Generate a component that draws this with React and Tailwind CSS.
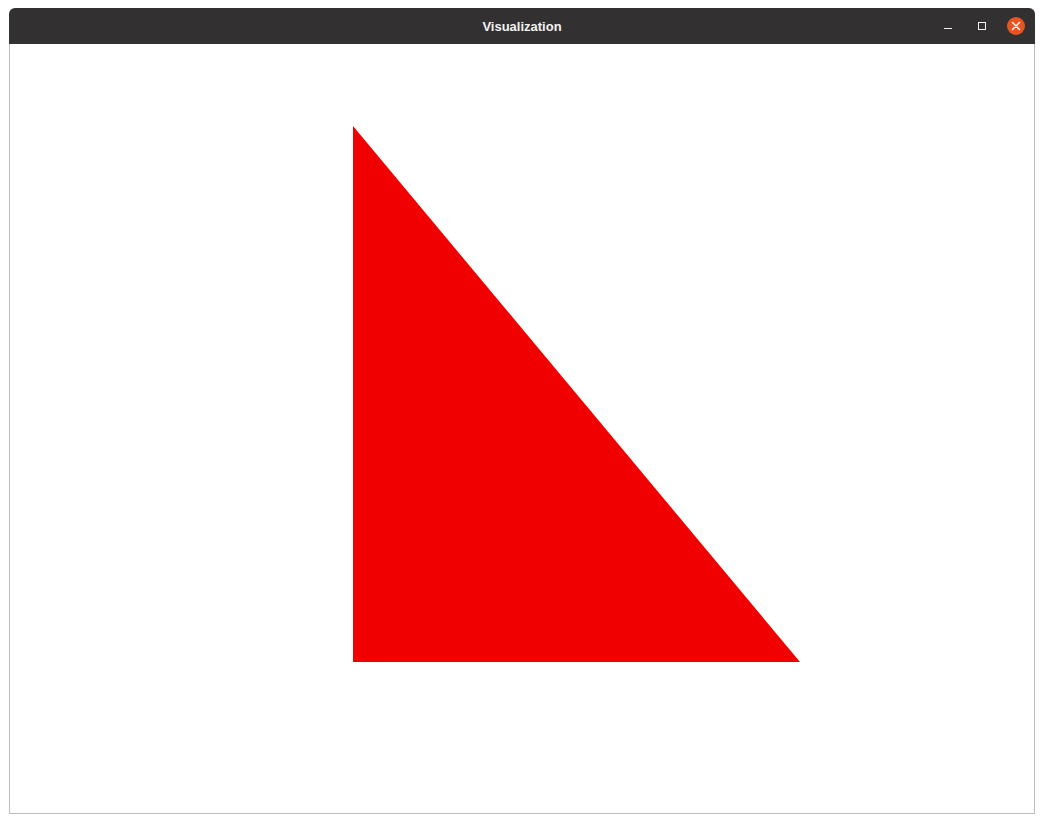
import React from "react";

function TitleBar() {
  return (
    <div className="relative flex h-[36px] items-center justify-center rounded-t-[6px] bg-[#323030] pt-[1px]">
      <span className="font-['Liberation_Sans',sans-serif] text-[13px] font-bold text-[#f2f2f2]">
        Visualization
      </span>
      <div className="absolute right-[10px] top-0 flex h-full items-center">
        <div className="mt-[4px] h-[1px] w-[8px] bg-[#f0f0f0]" />
        <div className="ml-[26px] h-[8px] w-[8px] border border-[#f0f0f0]" />
        <div className="ml-[21px] flex h-[18px] w-[18px] items-center justify-center rounded-full bg-[#e95420]">
          <svg width="10" height="10" viewBox="0 0 10 10">
            <path d="M1.5 1.5 L8.5 8.5 M8.5 1.5 L1.5 8.5" stroke="#fff" strokeWidth="1.4" strokeLinecap="round" />
          </svg>
        </div>
      </div>
    </div>
  );
}

export default function App() {
  return (
    <div className="h-[823px] w-[1044px] bg-white pl-[9px] pt-[8px]">
      <div className="w-[1026px]">
        <TitleBar />
        <div className="h-[770px] border-x border-b border-[#bdbdbd] bg-white">
          <svg width="1024" height="768" viewBox="0 0 1024 768">
            <polygon points="343,82 343,618 790,618" fill="#f00000" />
          </svg>
        </div>
      </div>
    </div>
  );
}
